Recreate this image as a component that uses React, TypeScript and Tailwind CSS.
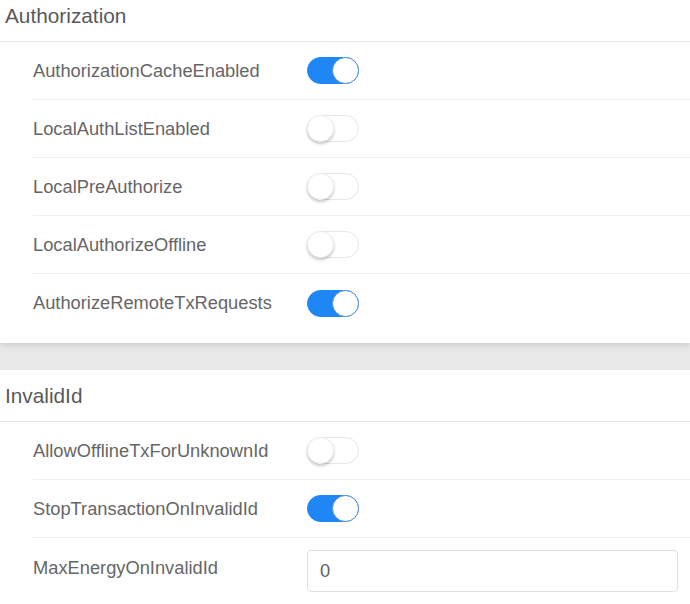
import { useState } from "react"

function Toggle({ initial }: { initial: boolean }) {
  const [on, setOn] = useState(initial)
  return (
    <button
      type="button"
      onClick={() => setOn(!on)}
      className={`relative w-[52px] h-[27px] rounded-full border ${
        on ? "bg-[#1f86f5] border-[#1f86f5]" : "bg-white border-[#e6e6e6]"
      }`}
    >
      <span
        className={`absolute top-[-1px] h-[27px] w-[27px] rounded-full bg-white ${
          on
            ? "right-[-1px] border border-[#5a8fd6]"
            : "left-[-1px] border border-[#eeeeee] shadow-[0_2px_3px_rgba(0,0,0,0.22)]"
        }`}
      />
    </button>
  )
}

function Row({ label, on, last }: { label: string; on: boolean; last?: boolean }) {
  return (
    <div className={`flex items-center h-[58px] ${last ? "" : "border-b border-[#f0f0f0]"}`}>
      <div className="w-[274px] text-[18.3px] text-[#666666]">{label}</div>
      <Toggle initial={on} />
    </div>
  )
}

function Header({ title }: { title: string }) {
  return (
    <div className="h-[52px] flex items-center pl-[5px] border-b border-[#e4e4e4] text-[20.8px] text-[#595959]">
      {title}
    </div>
  )
}

export default function App() {
  return (
    <div className="w-[690px] h-[604px] overflow-hidden bg-[#e8e8e8] font-['Liberation_Sans',Arial,sans-serif]">
      <div className="bg-white shadow-[0_2px_6px_rgba(0,0,0,0.12)] -mt-[10px] pb-[11px]">
        <Header title="Authorization" />
        <div className="pl-[33px]">
          <Row label="AuthorizationCacheEnabled" on />
          <Row label="LocalAuthListEnabled" on={false} />
          <Row label="LocalPreAuthorize" on={false} />
          <Row label="LocalAuthorizeOffline" on={false} />
          <Row label="AuthorizeRemoteTxRequests" on last />
        </div>
      </div>

      <div className="h-[27px]" />

      <div className="bg-white pb-[12px]">
        <Header title="InvalidId" />
        <div className="pl-[33px]">
          <Row label="AllowOfflineTxForUnknownId" on={false} />
          <Row label="StopTransactionOnInvalidId" on />
          <div className="flex items-start pt-[12px] pr-[12px]">
            <div className="w-[274px] text-[18.3px] text-[#666666] pt-[4px]">MaxEnergyOnInvalidId</div>
            <input
              defaultValue="0"
              className="flex-1 h-[42px] px-[12px] rounded-[4px] border border-[#dcdfe6] text-[18.3px] text-[#606060] outline-none"
            />
          </div>
        </div>
      </div>
    </div>
  )
}
